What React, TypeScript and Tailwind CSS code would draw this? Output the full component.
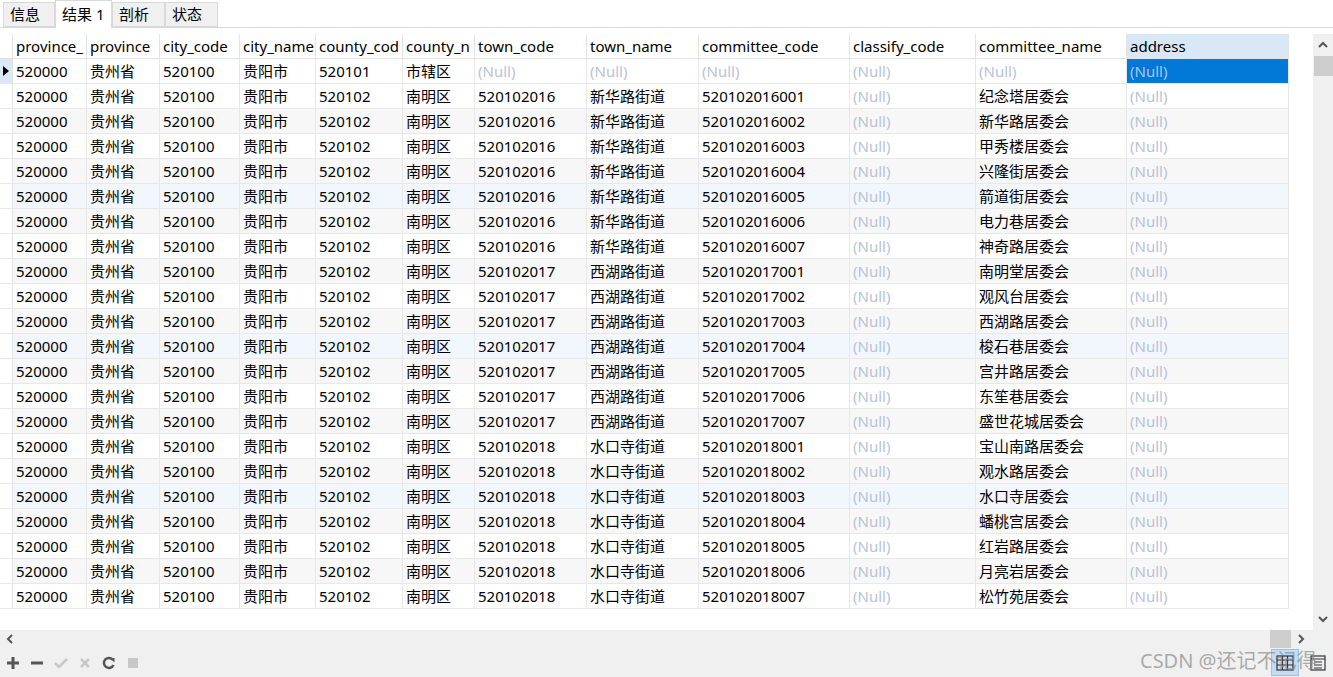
import React from "react";

const cols = [
  { name: "province_", w: 74 },
  { name: "province", w: 73 },
  { name: "city_code", w: 80 },
  { name: "city_name", w: 76 },
  { name: "county_cod", w: 87 },
  { name: "county_n", w: 72 },
  { name: "town_code", w: 112 },
  { name: "town_name", w: 112 },
  { name: "committee_code", w: 151 },
  { name: "classify_code", w: 126 },
  { name: "committee_name", w: 151 },
  { name: "address", w: 162 },
];

const towns = [
  {
    code: "520102016",
    name: "新华路街道",
    list: ["纪念塔居委会", "新华路居委会", "甲秀楼居委会", "兴隆街居委会", "箭道街居委会", "电力巷居委会", "神奇路居委会"],
  },
  {
    code: "520102017",
    name: "西湖路街道",
    list: ["南明堂居委会", "观风台居委会", "西湖路居委会", "梭石巷居委会", "宫井路居委会", "东笙巷居委会", "盛世花城居委会"],
  },
  {
    code: "520102018",
    name: "水口寺街道",
    list: ["宝山南路居委会", "观水路居委会", "水口寺居委会", "蟠桃宫居委会", "红岩路居委会", "月亮岩居委会", "松竹苑居委会"],
  },
];

type Cell = string | null;

const rows: Cell[][] = [
  ["520000", "贵州省", "520100", "贵阳市", "520101", "市辖区", null, null, null, null, null, null],
];
towns.forEach((t) =>
  t.list.forEach((c, i) =>
    rows.push(["520000", "贵州省", "520100", "贵阳市", "520102", "南明区", t.code, t.name, `${t.code}00${i + 1}`, null, c, null])
  )
);

function Chevron({ dir }: { dir: "up" | "down" | "left" | "right" }) {
  const d = {
    up: "M2 8 L6 4 L10 8",
    down: "M2 4 L6 8 L10 4",
    left: "M8 2 L4 6 L8 10",
    right: "M4 2 L8 6 L4 10",
  }[dir];
  return (
    <svg width="12" height="12" viewBox="0 0 12 12">
      <path d={d} fill="none" stroke="#555" strokeWidth="2" />
    </svg>
  );
}

function Tab({ label, active }: { label: string; active?: boolean }) {
  return (
    <div
      className={
        active
          ? "h-[28px] px-[6px] bg-white border border-b-0 border-[#d9d9d9] flex items-center text-[15px] text-black -mb-px"
          : "h-[25px] px-[6px] bg-[#f0f0f0] border border-[#d9d9d9] flex items-center text-[15px] text-black"
      }
    >
      {label}
    </div>
  );
}

export default function App() {
  return (
    <div
      className="w-[1333px] h-[677px] bg-white flex flex-col overflow-hidden relative"
      style={{ fontFamily: '"Noto Sans", "Noto Sans CJK SC", sans-serif' }}
    >
      {/* tabs */}
      <div className="h-[28px] flex items-end pl-[3px] border-b border-[#d9d9d9] shrink-0">
        <div className="w-[52px]"><Tab label="信息" /></div>
        <div className="w-[57px]"><Tab label="结果 1" active /></div>
        <div className="w-[53px]"><Tab label="剖析" /></div>
        <div className="w-[53px]"><Tab label="状态" /></div>
      </div>

      <div className="h-[6px] shrink-0" />

      {/* grid + vertical scrollbar */}
      <div className="flex flex-1 min-h-0">
        <div className="w-[1313px] overflow-hidden">
          <div className="flex w-max h-[25px] border-b border-[#e3e3e3]">
            <div className="w-[13px] shrink-0 border-r border-[#e3e3e3]" />
            {cols.map((c) => (
              <div
                key={c.name}
                style={{ width: c.w }}
                className={
                  "shrink-0 border-r border-[#e3e3e3] px-[3px] text-[15px] leading-[24px] whitespace-nowrap overflow-hidden text-black " +
                  (c.name === "address" ? "bg-[#d9e8f7]" : "")
                }
              >
                {c.name}
              </div>
            ))}
          </div>
          {rows.map((r, ri) => {
            const bg =
              ri === 5 || ri === 11 || ri === 17
                ? "bg-[#f2f7fd]"
                : ri % 2 === 0 && ri !== 0
                ? "bg-[#f7f7f7]"
                : "bg-white";
            return (
              <div key={ri} className={"flex w-max h-[25px] border-b border-[#e8e8e8] " + bg}>
                <div
                  className={
                    "w-[13px] shrink-0 border-r border-[#e3e3e3] flex items-center justify-center " +
                    (ri === 0 ? "bg-[#dbe8f6]" : "bg-white")
                  }
                >
                  {ri === 0 && (
                    <svg width="6" height="10" viewBox="0 0 6 10">
                      <path d="M0 0 L6 5 L0 10 Z" fill="#000" />
                    </svg>
                  )}
                </div>
                {cols.map((c, ci) => {
                  const v = r[ci];
                  const sel = ri === 0 && ci === 11;
                  return (
                    <div
                      key={ci}
                      style={{ width: c.w }}
                      className={
                        "shrink-0 border-r border-[#e8e8e8] px-[3px] text-[15px] leading-[24px] whitespace-nowrap overflow-hidden " +
                        (sel ? "bg-[#0078d7] text-[#a9c6ea]" : v === null ? "text-[#b9c3d6]" : "text-black")
                      }
                    >
                      {v === null ? "(Null)" : v}
                    </div>
                  );
                })}
              </div>
            );
          })}
        </div>
        <div className="w-[20px] bg-[#f0f0f0] flex flex-col items-center ml-auto">
          <div className="h-[22px] flex items-center justify-center"><Chevron dir="up" /></div>
          <div className="w-[19px] h-[20px] bg-[#cdcdcd]" />
          <div className="flex-1" />
          <div className="h-[22px] flex items-center justify-center"><Chevron dir="down" /></div>
        </div>
      </div>

      {/* horizontal scrollbar */}
      <div className="h-[18px] bg-[#f0f0f0] flex items-center shrink-0">
        <div className="w-[20px] flex justify-center"><Chevron dir="left" /></div>
        <div className="flex-1" />
        <div className="w-[21px] h-[18px] bg-[#cdcdcd]" />
        <div className="w-[20px] flex justify-center"><Chevron dir="right" /></div>
        <div className="w-[22px]" />
      </div>

      {/* toolbar */}
      <div className="h-[29px] bg-[#f0f0f0] flex items-center pl-[5px] gap-[8px] shrink-0">
        <svg width="16" height="16" viewBox="0 0 16 16">
          <path d="M8 2 V14 M2 8 H14" stroke="#555" strokeWidth="3" />
        </svg>
        <svg width="16" height="16" viewBox="0 0 16 16">
          <path d="M2 8 H14" stroke="#555" strokeWidth="3" />
        </svg>
        <svg width="16" height="16" viewBox="0 0 16 16">
          <path d="M2 8 L6 12 L14 4" fill="none" stroke="#c8c8c8" strokeWidth="2.5" />
        </svg>
        <svg width="16" height="16" viewBox="0 0 16 16">
          <path d="M4 4 L12 12 M12 4 L4 12" stroke="#c8c8c8" strokeWidth="2.5" />
        </svg>
        <svg width="16" height="16" viewBox="0 0 16 16">
          <path d="M12 5 A5 5 0 1 0 12.5 10" fill="none" stroke="#555" strokeWidth="2.5" />
          <path d="M9 3 L13.5 3 L13.5 7.5 Z" fill="#555" />
        </svg>
        <svg width="16" height="16" viewBox="0 0 16 16">
          <rect x="3" y="3" width="10" height="10" fill="#c8c8c8" />
        </svg>
        <div className="flex-1" />
        <div className="w-[28px] h-[27px] bg-[#c4dcf3] border border-[#9ac3ea] flex items-center justify-center">
          <svg width="18" height="16" viewBox="0 0 18 16">
            <rect x="1" y="1" width="16" height="14" fill="none" stroke="#333" strokeWidth="1.2" />
            <path d="M1 5 H17 M1 10 H17 M6.5 1 V15 M11.5 1 V15" stroke="#333" strokeWidth="1.2" />
          </svg>
        </div>
        <div className="w-[22px] flex items-center justify-center mr-[4px]">
          <svg width="16" height="16" viewBox="0 0 16 16">
            <rect x="1" y="1" width="14" height="14" fill="none" stroke="#333" strokeWidth="1.2" />
            <path d="M1 4 H15 M4 7 H12 M4 10 H12 M4 13 H12" stroke="#333" strokeWidth="1.2" />
          </svg>
        </div>
      </div>

      {/* watermark */}
      <div className="absolute left-[1140px] top-[646px] text-[20px] text-[#8a8a8a]/70 whitespace-nowrap pointer-events-none">
        CSDN @还记不记得
      </div>
    </div>
  );
}
